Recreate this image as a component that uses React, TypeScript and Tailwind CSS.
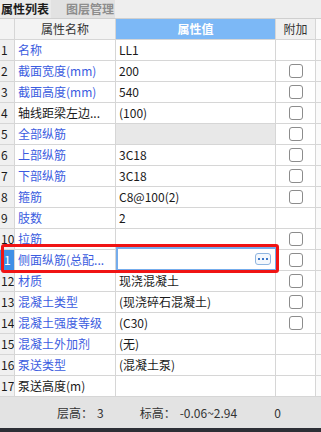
import React from "react";

type Row = {
  n: string;
  name: string;
  value: string;
  blue: boolean;
  check: boolean;
  gray?: boolean;
  selected?: boolean;
};

const rows: Row[] = [
  { n: "1", name: "名称", value: "LL1", blue: true, check: false },
  { n: "2", name: "截面宽度(mm)", value: "200", blue: true, check: true },
  { n: "3", name: "截面高度(mm)", value: "540", blue: true, check: true },
  { n: "4", name: "轴线距梁左边...", value: "(100)", blue: false, check: true },
  { n: "5", name: "全部纵筋", value: "", blue: true, check: true, gray: true },
  { n: "6", name: "上部纵筋", value: "3C18", blue: true, check: true },
  { n: "7", name: "下部纵筋", value: "3C18", blue: true, check: true },
  { n: "8", name: "箍筋", value: "C8@100(2)", blue: true, check: true },
  { n: "9", name: "肢数", value: "2", blue: true, check: false },
  { n: "10", name: "拉筋", value: "", blue: true, check: true },
  { n: "1", name: "侧面纵筋(总配...", value: "", blue: true, check: true, selected: true },
  { n: "12", name: "材质", value: "现浇混凝土", blue: true, check: true },
  { n: "13", name: "混凝土类型", value: "(现浇碎石混凝土)", blue: true, check: true },
  { n: "14", name: "混凝土强度等级", value: "(C30)", blue: true, check: true },
  { n: "15", name: "混凝土外加剂", value: "(无)", blue: true, check: false },
  { n: "16", name: "泵送类型", value: "(混凝土泵)", blue: true, check: false },
  { n: "17", name: "泵送高度(m)", value: "", blue: false, check: false },
];

function Checkbox() {
  return (
    <div className="w-[14px] h-[14px] border border-[#8c8c8c] rounded-[3px] bg-white" />
  );
}

export default function App() {
  return (
    <div
      className="relative w-[321px] h-[432px] bg-white flex flex-col overflow-hidden text-[12px] text-[#1a1a1a]"
      style={{ fontFamily: '"Noto Sans CJK SC", "Noto Sans", sans-serif' }}
    >
      {/* tabs */}
      <div className="h-[19px] flex items-stretch bg-[#eeeeee] border-b border-[#cfcfcf]">
        <div className="w-[51px] bg-[#eaeaea] flex items-center pl-[1px] pb-[1px] text-[12px] leading-none text-[#1c1c1c] font-bold whitespace-nowrap">
          属性列表
        </div>
        <div className="w-[64px] bg-[#e2e2e2] flex items-center pl-[15px] pb-[1px] text-[12px] leading-none text-[#8d8d8d] font-bold whitespace-nowrap">
          图层管理
        </div>
        <div className="flex-1" />
      </div>

      {/* header */}
      <div className="h-[21px] flex border-b border-[#d6d6d6] leading-none">
        <div className="w-[15px] border-r border-[#d6d6d6] bg-[#f3f3f3]" />
        <div className="w-[101px] border-r border-[#d6d6d6] bg-[#f3f3f3] flex items-center justify-center pb-[1px] text-[#333]">
          属性名称
        </div>
        <div className="w-[160px] border-r border-[#d6d6d6] bg-[#7cb8f6] flex items-center justify-center pb-[1px] text-white font-bold">
          属性值
        </div>
        <div className="w-[40px] border-r border-[#d6d6d6] bg-[#f0f0f0] flex items-center justify-center pb-[1px] text-[#333]">
          附加
        </div>
        <div className="flex-1 bg-[#fafafa]" />
      </div>

      {/* body */}
      {rows.map((r, i) => (
        <div key={i} className="h-[21px] flex border-b border-[#d6d6d6] leading-none">
          <div
            className={
              r.selected
                ? "w-[15px] border-r border-[#d6d6d6] bg-[#3f8fe6] text-white flex items-center pl-[4px] pb-[1px] overflow-hidden whitespace-nowrap"
                : "w-[15px] border-r border-[#d6d6d6] bg-[#f0f0f0] flex items-center pl-[1px] pb-[1px] overflow-hidden whitespace-nowrap"
            }
          >
            {r.n}
          </div>
          <div
            className={
              r.blue
                ? "w-[101px] border-r border-[#d6d6d6] flex items-center pl-[3px] pb-[1px] whitespace-nowrap overflow-hidden text-[#3b5ce0]"
                : "w-[101px] border-r border-[#d6d6d6] flex items-center pl-[3px] pb-[1px] whitespace-nowrap overflow-hidden text-[#1a1a1a]"
            }
          >
            {r.name}
          </div>
          {r.selected ? (
            <div className="w-[160px] border-r border-[#d6d6d6] relative">
              <div className="absolute left-0 top-[-3px] w-[161px] h-[24px] border-2 border-[#74acec] bg-white flex items-center justify-end pr-[4px]">
                <div className="w-[16px] h-[12px] rounded-[3px] border border-[#8fb5e0] bg-[#f4f8fd] flex items-center justify-center gap-[2px]">
                  <span className="w-[2px] h-[2px] bg-[#3d78c8]" />
                  <span className="w-[2px] h-[2px] bg-[#3d78c8]" />
                  <span className="w-[2px] h-[2px] bg-[#3d78c8]" />
                </div>
              </div>
            </div>
          ) : (
            <div
              className={
                r.gray
                  ? "w-[160px] border-r border-[#d6d6d6] bg-[#e8e8e8] flex items-center pl-[3px] pb-[1px]"
                  : "w-[160px] border-r border-[#d6d6d6] flex items-center pl-[3px] pb-[1px] whitespace-nowrap"
              }
            >
              {r.value}
            </div>
          )}
          <div className="w-[40px] border-r border-[#d6d6d6] flex items-center justify-center">
            {r.check ? <Checkbox /> : null}
          </div>
          <div className="flex-1 bg-[#fafafa]" />
        </div>
      ))}

      {/* status bar */}
      <div className="h-[31px] bg-[#e3e3e3] flex items-center text-[#333] leading-none">
        <span className="ml-[57px]">层高：</span>
        <span className="ml-[4px]">3</span>
        <span className="ml-[36px]">标高：</span>
        <span className="ml-[4px]">-0.06~2.94</span>
        <span className="ml-[37px]">0</span>
      </div>
      <div className="h-[4px] bg-[#2d2f36]" />

      {/* red annotation box */}
      <div className="absolute left-[1px] top-[244px] w-[278px] h-[29px] border-[3px] border-[#f01414] rounded-[3px] pointer-events-none" />
    </div>
  );
}
